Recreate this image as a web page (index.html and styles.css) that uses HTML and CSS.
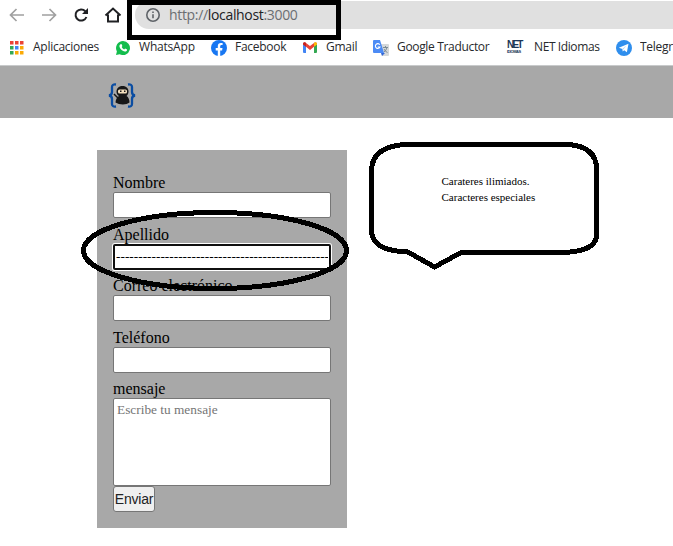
FILE: index.html
```html
<!DOCTYPE html>
<html lang="es">
<head>
<meta charset="utf-8">
<title>Formulario</title>
<link rel="stylesheet" href="styles.css">
</head>
<body>
<div class="toolbar">
  <svg class="nav" width="130" height="30" viewBox="0 0 130 30" fill="none">
    <path d="M24 15H10.5M16.5 9l-6 6 6 6" stroke="#a0a0a0" stroke-width="1.7"/>
    <path d="M42 15h13.5M49.500 9l6 6-6 6" stroke="#a0a0a0" stroke-width="1.7"/>
    <path d="M85.300 11.200A5.600 5.600 0 1 0 86.400 17" stroke="#202124" stroke-width="2"/>
    <path d="M88 8v6h-6z" fill="#202124"/>
    <path d="M105.500 15.500L113 8.500l7.500 7M108 14.500v7h10v-7" stroke="#202124" stroke-width="2"/>
  </svg>
  <div class="address">
    <svg width="16" height="16" viewBox="0 0 16 16" fill="none" stroke="#5f6368" stroke-width="1.6"><circle cx="8" cy="8" r="6.200"/><path d="M8 7.200v4M8 4.400v1.600"/></svg>
    <span class="url">http://<b>localhost</b>:3000</span>
  </div>
</div>
<div class="bookmarks">
  <div class="bookmark">
    <svg width="14" height="14" viewBox="0 0 14 14"><path fill="#ea4335" d="M0 0h3.500v3.500H0zM5 0h3.500v3.500H5zM10 0h3.500v3.500H10z"/><path fill="#34a853" d="M0 5h3.500v3.500H0zM0 10h3.500v3.500H0z"/><path fill="#4285f4" d="M5 5h3.500v3.500H5z"/><path fill="#fbaa05" d="M10 5h3.500v3.500H10zM5 10h3.500v3.500H5zM10 10h3.500v3.500H10z"/></svg>
    <span class="l1">Aplicaciones</span>
  </div>
  <div class="bookmark">
    <svg width="14" height="14" viewBox="0 0 14 14"><path fill="#13bd4d" d="M7 0a7 7 0 1 1-3.300 13.200L0 14l.9-3.600A7 7 0 0 1 7 0z"/><path fill="#fff" d="M4.500 3.200l1-.2.900 2-.7 1c.6 1.200 1.300 1.800 2.500 2.400l.9-.9 2 .9c0 1.400-1 2.200-2.100 2.100C6 10.200 3.500 7.600 3.400 5.100c0-.8.4-1.500 1.100-1.900z"/></svg>
    <span class="l1 wide">WhatsApp</span>
  </div>
  <div class="bookmark">
    <svg width="16" height="16" viewBox="0 0 16 16"><circle cx="8" cy="8" r="8" fill="#1877f2"/><path fill="#fff" d="M6.800 16v-5.600H4.700V8h2.100V6.200c0-2.200 1.200-3.300 3.100-3.300l1.700.1v2h-1c-1 0-1.400.6-1.400 1.300V8h2.300l-.4 2.400H9.200V16z"/></svg>
    <span>Facebook</span>
  </div>
  <div class="bookmark">
    <svg width="14" height="11" viewBox="0 0 14 11"><path fill="#4285f4" d="M0 2l3 2v7H1q-1 0-1-1z"/><path fill="#34a853" d="M14 2l-3 2v7h2q1 0 1-1z"/><path fill="#ea4335" d="M0 2Q0 .2 2 .2L7 4l5-3.800Q14 .2 14 2L11 4.800 7 7.900 3 4.800z"/><path fill="#c5221f" d="M0 1.500Q.4 0 2 .2l1 .8v3.800L0 2.500z"/><path fill="#fbbc04" d="M14 1.500Q13.600 0 12 .2l-1 .8v3.800l3-2.300z"/></svg>
    <span class="l1">Gmail</span>
  </div>
  <div class="bookmark">
    <svg width="16" height="16" viewBox="0 0 16 16"><path fill="#d5d8da" d="M6 4h9q1 0 1 1v10q0 1-1 1H9z"/><path fill="#3367d6" d="M8 13h4l-3 3z"/><path fill="#4c8bf5" d="M1 0h6l4 13H1q-1 0-1-1V1q0-1 1-1z"/><path d="M6.800 4.700A2.400 2.400 0 1 0 7 7H4.700" fill="none" stroke="#fff" stroke-width="1.100"/><path d="M10 7.500h5M12.500 6v1.500M14 7.500q-1 3.500-3 4.500M11 9q1.500 3 3.500 3.500" fill="none" stroke="#74858f" stroke-width=".9"/></svg>
    <span class="long">Google Traductor</span>
  </div>
  <div class="bookmark">
    <span class="net"><b>NET</b><i>IDIOMAS</i></span>
    <span class="l4">NET Idiomas</span>
  </div>
  <div class="bookmark">
    <svg width="16" height="16" viewBox="0 0 16 16"><circle cx="8" cy="8" r="8" fill="#2f8eed"/><path fill="#fff" d="M2.800 7.700l9.700-3.900-1.600 8.400-2.700-2-1.500 1.400-.3-2.500z"/><path d="M6.300 9l4.200-3.400-3.300 4" fill="#a8d0f7"/></svg>
    <span class="cut">Telegram</span>
  </div>
</div>
<header class="header">
  <svg width="28" height="26" viewBox="0 0 28 26"><g fill="none" stroke="#0b4da2" stroke-width="2.300"><path d="M8 1.500Q4 1 4 4v5q0 3-3 3.500 3 .5 3 3.500v5q0 3 4 2.500"/><path d="M20 1.500q4-.5 4 2.500v5q0 3 3 3.500-3 .5-3 3.500v5q0 3-4 2.500"/></g><path d="M6 11l5 5" stroke="#171717" stroke-width="1.500"/><path fill="#171717" d="M14.500 3c4 0 6 2.500 6 5.500 0 2-1 3.500-2 4.500 2 1 3 4 3 6.500-3 2.500-10 2.500-14 0 .3-3 1.500-5.500 3.500-6.500-1.500-1-2.500-2.500-2.500-4.500 0-3 2-5.500 6-5.500z"/><rect x="10" y="6.500" width="9" height="4" rx="1.500" fill="#f4dfbd"/><path fill="#171717" d="M12 7.500h1.500V9H12zM16 7.500h1.500V9H16z"/></svg>
</header>
<main class="content">
  <form class="card">
    <label>Nombre<input type="text"></label>
    <label>Apellido<input class="active" type="text" value="--------------------------------------------------------------"></label>
    <label>Correo electrónico<input type="text"></label>
    <label>Teléfono<input type="text"></label>
    <label>mensaje<textarea placeholder="Escribe tu mensaje"></textarea></label>
    <button type="button">Enviar</button>
  </form>
  <div class="note">
    <svg class="bubble" width="232" height="130" viewBox="0 0 232 130" shape-rendering="crispEdges"><path d="M36 3.500H201Q228.500 6 228.500 28V96Q226 109 202 111H94L66.500 126 40 111Q5 110 3.500 91V28Q5 6 36 3.500Z" fill="none" stroke="#000" stroke-width="5"/></svg>
    <p>Carateres ilimiados.<br>Caracteres especiales</p>
  </div>
</main>
<svg class="marks" width="673" height="546" viewBox="0 0 673 546" fill="none" stroke="#000" shape-rendering="crispEdges">
  <rect x="129.500" y="2" width="209" height="35.500" stroke-width="5"/>
  <ellipse cx="215" cy="250.500" rx="131.500" ry="38" stroke-width="5"/>
  <path d="M329.500 250v14" stroke-width="1"/>
</svg>
</body>
</html>
```
FILE: styles.css
```css
* { box-sizing: border-box; }
body { margin: 0; width: 673px; height: 546px; overflow: hidden; position: relative; background: #fff; color: #000; font-family: "Liberation Serif", serif; font-size: 16px; }
.toolbar { display: flex; height: 30px; }
.nav { flex: none; }
.address { flex: 1; margin: 1px 0 1px 5px; border-radius: 14px 0 0 14px; background: #e0e0e0; display: flex; align-items: center; padding-left: 10px; gap: 8px; }
.url { font: 14px/20px "Open Sans", sans-serif; color: #6b6e72; letter-spacing: -.33px; }
.url b { font-weight: 400; color: #202124; }
.bookmarks { height: 35px; padding-left: 10px; display: grid; grid-template-columns: 106px 95px 92px 70px 134px 109px 57px; align-items: center; font: 12px/16px "Open Sans", sans-serif; letter-spacing: -.27px; color: #27292c; white-space: nowrap; overflow: hidden; }
.bookmark { display: flex; align-items: center; gap: 8px; min-width: 0; }
.bookmark svg { flex: none; }
.bookmark > span { padding-bottom: 1px; }
.wide, .l1.wide { letter-spacing: -.2px; }
.long { letter-spacing: -.33px; }
.cut { flex: 1; min-width: 0; overflow: hidden; }
.l1 { margin-left: 1px; }
.l4 { margin-left: 4px; letter-spacing: -.4px; }
.net { width: 15px; display: flex; flex-direction: column; color: #1c3658; }
.net b { font: 700 10px/10px "Liberation Sans", sans-serif; letter-spacing: -1.8px; }
.net i { font: normal 700 4px/4px "Liberation Sans", sans-serif; letter-spacing: -.5px; }
.header { height: 53px; border-top: 1px solid #c8cacb; background: #a8a8a8; padding: 17px 0 0 108px; }
.header svg { display: block; }
.content { display: flex; align-items: flex-start; padding: 32px 0 0 97px; }
.card { width: 250px; height: 378px; background: #a8a8a8; padding: 24px 16px 16px; }
.card label { display: block; height: 51.5px; line-height: 18px; }
.card input, .card textarea { display: block; width: 218px; height: 26px; margin: 0; border: 1px solid #767676; border-radius: 2px; background: #fff; font: 13.333px "Liberation Serif", serif; padding: 1px 2px; }
.card input.active { border: 2px solid #101010; box-shadow: 0 0 0 1px #fff; padding: 0 1px; outline: none; }
.card textarea { height: 88px; resize: none; padding: 3px; }
.card textarea::placeholder { color: #757575; }
.card label:last-of-type { height: 106px; }
.card button { display: block; width: 42px; height: 26px; padding: 0; border: 1px solid #767676; border-radius: 3px; background: #efefef; color: #222; font: 14px "Liberation Sans", sans-serif; letter-spacing: -.2px; }
.note { position: relative; margin: -9px 0 0 21px; width: 232px; height: 130px; }
.bubble { display: block; }
.note p { position: absolute; left: 73.5px; top: 32px; margin: 0; font-size: 11px; line-height: 16px; white-space: nowrap; }
.marks { position: absolute; left: 0; top: 0; pointer-events: none; }
```
